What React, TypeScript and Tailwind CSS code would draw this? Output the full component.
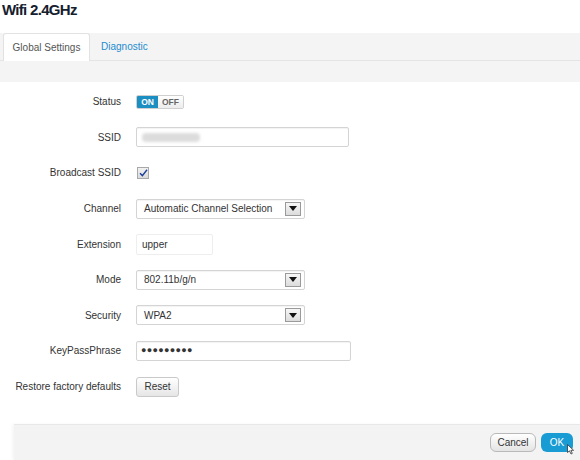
import React from "react";

const font = { fontFamily: '"Liberation Sans", Arial, sans-serif' };

function Arrow() {
  return (
    <span className="flex h-[14px] w-[16px] items-center justify-center border border-[#9a9a9a] bg-gradient-to-b from-[#f6f6f6] to-[#dcdcdc]">
      <svg width="8" height="5" viewBox="0 0 8 5">
        <path d="M0 0 L8 0 L4 5 Z" fill="#111" />
      </svg>
    </span>
  );
}

function Select({ value }: { value: string }) {
  return (
    <div className="flex h-[20px] w-[169px] items-center justify-between rounded-[2px] border border-[#d4d4d4] pl-[7px] pr-[3px] text-[10px] whitespace-nowrap text-[#333] shadow-[inset_0_1px_1px_rgba(0,0,0,0.05)]">
      <span>{value}</span>
      <Arrow />
    </div>
  );
}

function Row({ label, children }: { label: string; children: React.ReactNode }) {
  return (
    <div className="flex h-[35.6px] items-center">
      <div className="w-[122px] pr-[1px] text-right text-[10px] whitespace-nowrap text-[#333]">{label}</div>
      <div className="ml-[14px] flex items-center">{children}</div>
    </div>
  );
}

export default function App() {
  return (
    <div className="relative h-[460px] w-[580px] overflow-hidden bg-white" style={font}>
      <div className="h-[33px] pl-[2px] pt-[1px] text-[15px] font-bold leading-[18px] tracking-[-0.7px] text-[#15202e]">
        Wifi 2.4GHz
      </div>
      <div className="h-[49px] bg-[#f4f4f4]">
        <div className="flex h-[28px] items-stretch border-b border-[#e4e4e4]">
          <div className="ml-[3px] mb-[-1px] flex w-[87px] items-center justify-center rounded-t-[3px] border border-b-0 border-[#e2e2e2] bg-white text-[10px] text-[#555]">
            Global Settings
          </div>
          <div className="ml-[11px] flex items-center text-[10px] text-[#1e8ccf]">Diagnostic</div>
        </div>
      </div>
      <div className="pt-[2px]">
        <Row label="Status">
          <div className="flex h-[14px] overflow-hidden rounded-[2px] border border-[#cfcfcf] text-[8.5px] font-bold leading-none">
            <span className="flex w-[21px] items-center justify-center bg-[#1b8ec2] text-white">ON</span>
            <span className="flex w-[25px] items-center justify-center bg-gradient-to-b from-white to-[#ececec] text-[#666]">OFF</span>
          </div>
        </Row>
        <Row label="SSID">
          <div className="flex h-[20px] w-[213px] items-center rounded-[2px] border border-[#d4d4d4] pl-[5px] shadow-[inset_0_1px_1px_rgba(0,0,0,0.05)]">
            <span className="h-[9px] w-[58px] rounded-[4px] bg-[#dcdcdc] blur-[1.5px]" />
          </div>
        </Row>
        <Row label="Broadcast SSID">
          <div className="ml-[1px] flex h-[12px] w-[12px] items-center justify-center border border-[#a8a8a8] bg-gradient-to-b from-[#f2f2f2] to-[#dadada]">
            <svg width="9" height="8" viewBox="0 0 9 8">
              <path d="M1 4.2 L3.4 6.6 L8 0.8" stroke="#1c3f9a" strokeWidth="1.4" fill="none" />
            </svg>
          </div>
        </Row>
        <Row label="Channel">
          <Select value="Automatic Channel Selection" />
        </Row>
        <Row label="Extension">
          <div className="flex h-[21px] w-[77px] items-center rounded-[2px] border border-[#eeeeee] pl-[5px] text-[10px] text-[#333]">
            upper
          </div>
        </Row>
        <Row label="Mode">
          <Select value="802.11b/g/n" />
        </Row>
        <Row label="Security">
          <Select value="WPA2" />
        </Row>
        <Row label="KeyPassPhrase">
          <div className="flex h-[20px] w-[215px] items-center rounded-[2px] border border-[#d4d4d4] pl-[4px] text-[9px] tracking-[0.3px] text-[#333] shadow-[inset_0_1px_1px_rgba(0,0,0,0.05)]">
            ●●●●●●●●●
          </div>
        </Row>
        <Row label="Restore factory defaults">
          <div className="flex h-[20px] w-[43px] items-center justify-center rounded-[3px] border border-[#c9c9c9] bg-gradient-to-b from-white to-[#e6e6e6] text-[10px] text-[#333]">
            Reset
          </div>
        </Row>
      </div>
      <div className="absolute bottom-0 left-[14px] right-0 flex h-[36px] items-center justify-end gap-[5px] border-t border-[#e8e8e8] bg-[#f3f3f3] pr-[7px] shadow-[-2px_0_3px_rgba(0,0,0,0.04)]">
        <div className="flex h-[19px] w-[46px] items-center justify-center rounded-[6px] border border-[#b9b9b9] bg-gradient-to-b from-white to-[#e4e4e4] text-[10px] text-[#333]">
          Cancel
        </div>
        <div className="relative flex h-[19px] w-[32px] items-center justify-center rounded-[6px] bg-[#199bd4] text-[10px] text-white">
          OK
          <svg className="absolute left-[26px] top-[11px]" width="8" height="11" viewBox="0 0 8 11">
            <path d="M0.5 0.5 L0.5 8.5 L2.5 6.8 L4 10 L5.3 9.4 L3.9 6.3 L6.6 6.3 Z" fill="#fff" stroke="#333" strokeWidth="0.8" />
          </svg>
        </div>
      </div>
    </div>
  );
}
